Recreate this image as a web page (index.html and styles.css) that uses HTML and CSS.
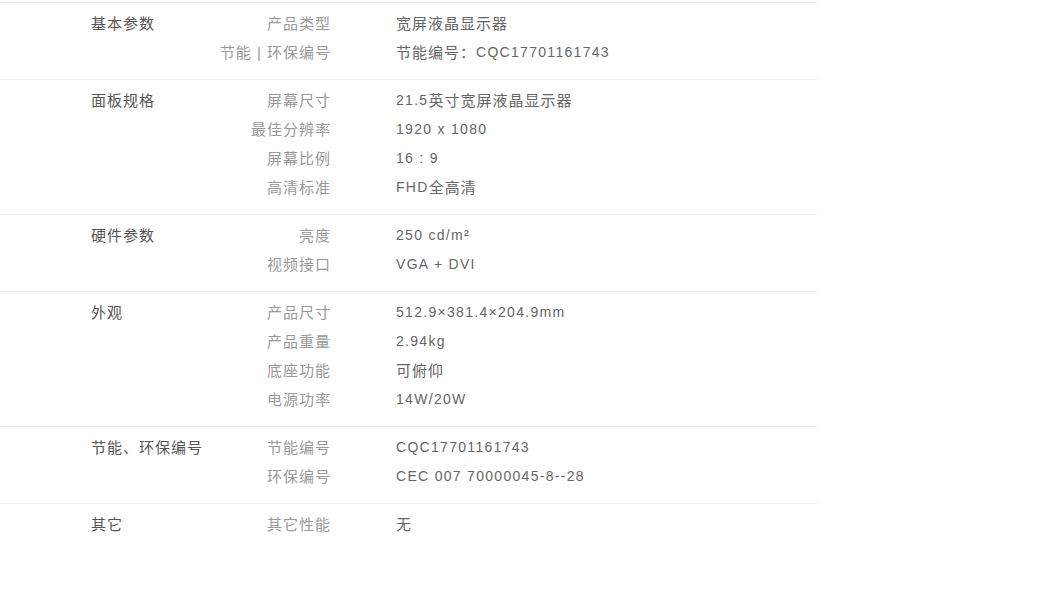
FILE: index.html
```html
<!DOCTYPE html>
<html lang="zh-CN">
<head>
    <meta charset="UTF-8">
    <title>规格参数</title>
    <link rel="stylesheet" href="styles.css">
</head>
<body>
    <div class="spec">
        <div class="group">
            <div class="group-name">基本参数</div>
            <ul class="items">
                <li><span class="label">产品类型</span><span class="value"><span class="cn">宽屏液晶显示器</span></span></li>
                <li><span class="label">节能 | 环保编号</span><span class="value"><span class="cn">节能编号：</span>CQC17701161743</span></li>
            </ul>
        </div>
        <div class="group">
            <div class="group-name">面板规格</div>
            <ul class="items">
                <li><span class="label">屏幕尺寸</span><span class="value">21.5<span class="cn">英寸宽屏液晶显示器</span></span></li>
                <li><span class="label">最佳分辨率</span><span class="value">1920 x 1080</span></li>
                <li><span class="label">屏幕比例</span><span class="value">16 : 9</span></li>
                <li><span class="label">高清标准</span><span class="value">FHD<span class="cn">全高清</span></span></li>
            </ul>
        </div>
        <div class="group">
            <div class="group-name">硬件参数</div>
            <ul class="items">
                <li><span class="label">亮度</span><span class="value">250 cd/m²</span></li>
                <li><span class="label">视频接口</span><span class="value">VGA + DVI</span></li>
            </ul>
        </div>
        <div class="group">
            <div class="group-name">外观</div>
            <ul class="items">
                <li><span class="label">产品尺寸</span><span class="value">512.9×381.4×204.9mm</span></li>
                <li><span class="label">产品重量</span><span class="value">2.94kg</span></li>
                <li><span class="label">底座功能</span><span class="value"><span class="cn">可俯仰</span></span></li>
                <li><span class="label">电源功率</span><span class="value">14W/20W</span></li>
            </ul>
        </div>
        <div class="group">
            <div class="group-name">节能、环保编号</div>
            <ul class="items">
                <li><span class="label">节能编号</span><span class="value">CQC17701161743</span></li>
                <li><span class="label">环保编号</span><span class="value">CEC 007 70000045-8--28</span></li>
            </ul>
        </div>
        <div class="group">
            <div class="group-name">其它</div>
            <ul class="items">
                <li><span class="label">其它性能</span><span class="value"><span class="cn">无</span></span></li>
            </ul>
        </div>
    </div>
</body>
</html>
```

FILE: styles.css
```css
body {
    margin: 0;
    padding-top: 2px;
    background-color: #fff;
    font-family: "Liberation Sans", Arial, "Noto Sans CJK SC", sans-serif;
    font-size: 14px;
}
.spec {
    width: 817px;
}
.group {
    display: flex;
    border-top: 1px solid #eee;
    padding: 6px 0 12px 0;
    line-height: 29px;
}
.group-name {
    width: 120px;
    height: 29px;
    padding-left: 91px;
    color: #555;
    font-size: 15px;
    letter-spacing: 1px;
    white-space: nowrap;
}
.items {
    list-style: none;
    margin: 0;
    padding: 0;
}
.items li {
    display: flex;
    height: 29px;
}
.label {
    width: 120px;
    text-align: right;
    color: #999;
    font-size: 15px;
    letter-spacing: 1px;
    white-space: nowrap;
}
.value {
    margin-left: 65px;
    color: #666;
    letter-spacing: 1.3px;
}
.value .cn {
    font-size: 15px;
    letter-spacing: 1px;
    vertical-align: top;
}
```
